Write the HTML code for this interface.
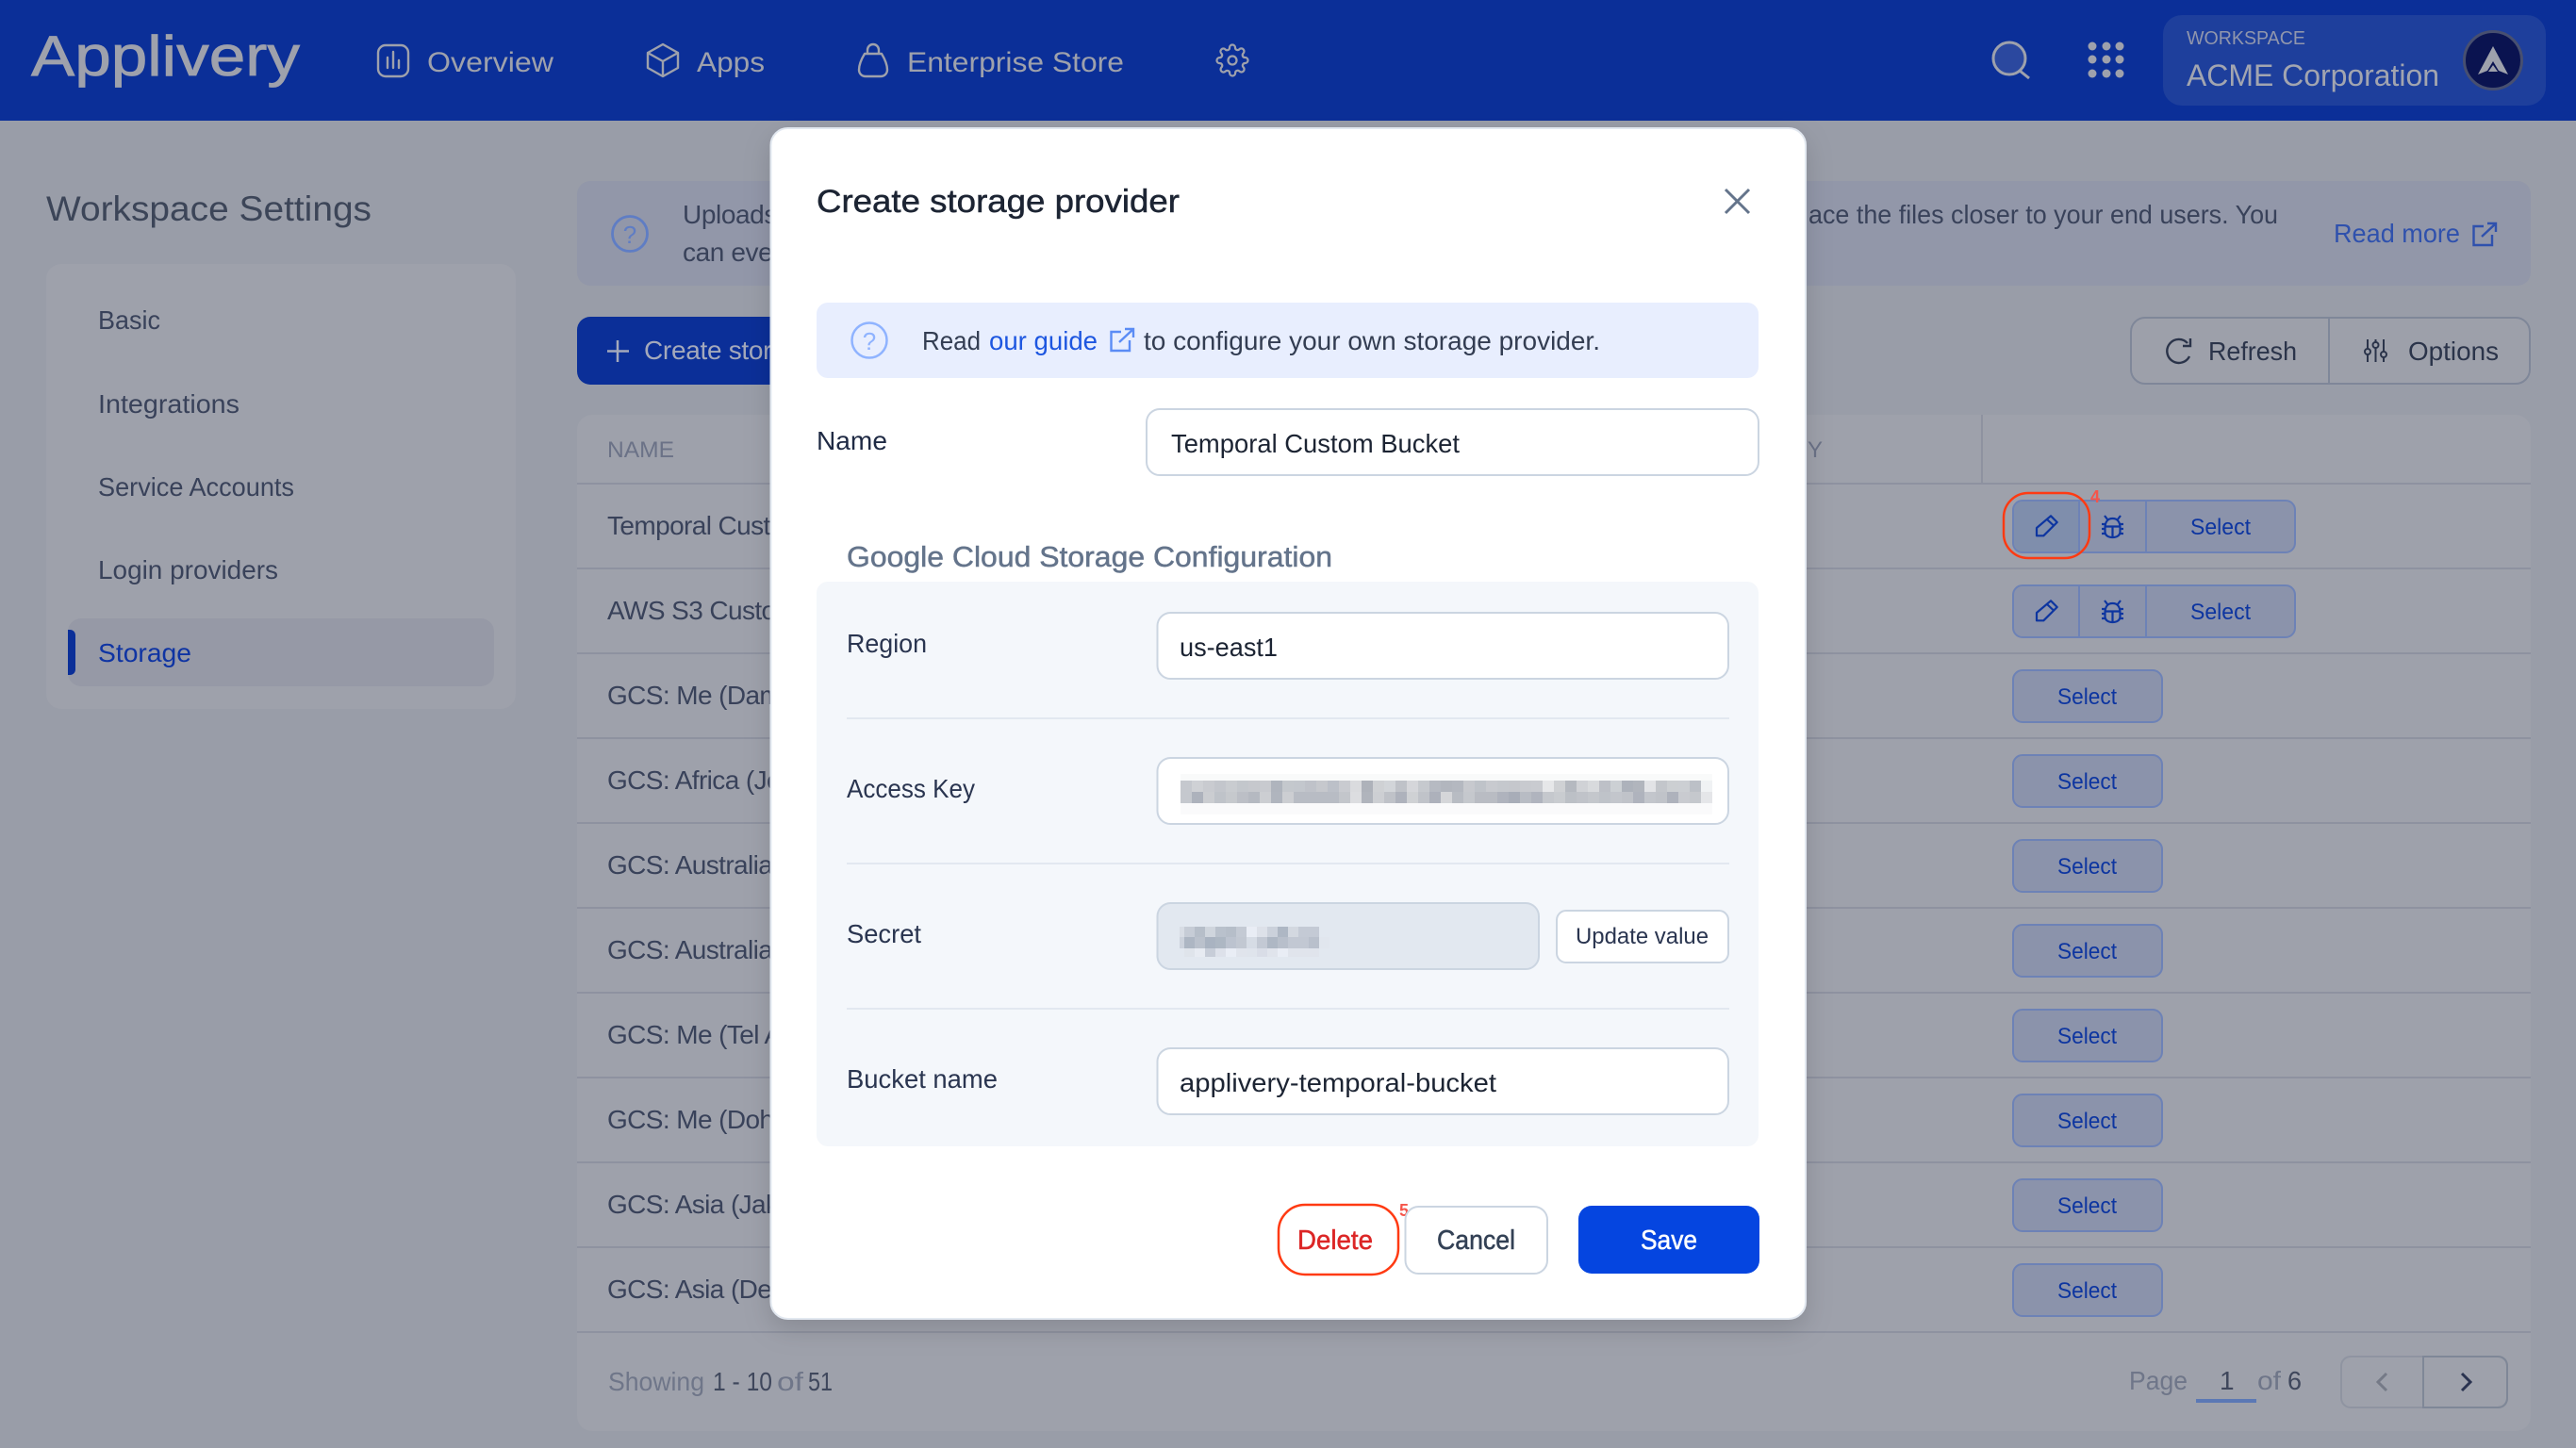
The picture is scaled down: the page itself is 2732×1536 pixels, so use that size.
<!DOCTYPE html>
<html lang="en">
<head>
<meta charset="utf-8">
<title>Create storage provider</title>
<style>
html,body{margin:0;padding:0;width:2732px;height:1536px;overflow:hidden;background:#999da8}
svg{display:block}
text{font-family:"Liberation Sans",sans-serif;white-space:pre}
.m{stroke-width:.5px;stroke:currentColor}
</style>
</head>
<body>
<svg xmlns="http://www.w3.org/2000/svg" width="2732" height="1536" viewBox="0 0 2732 1536">
<defs>
<filter id="sh" x="-5%" y="-5%" width="110%" height="110%"><feDropShadow dx="0" dy="10" stdDeviation="14" flood-color="#000" flood-opacity=".14"/></filter>
<g id="ext" fill="none" stroke-width="2.4"><path d="M12 4H1.5V24H21V13M10 15L25 1M16 1H25V10"/></g>
<g id="pen" fill="none" stroke="#0d35a0" stroke-width="2.2" stroke-linejoin="round"><path d="M2160 568.3V560L2175 547.3L2181.7 554L2167.3 568.3Z"/><path d="M2171 551L2178 557.5"/></g>
<g id="bug" fill="none" stroke="#0d35a0" stroke-width="2.2"><path d="M2232.500 560C2232.500 553 2236 550 2240.500 550S2248.500 553 2248.500 560V564C2248.500 568 2245 570 2240.500 570S2232.500 568 2232.500 564ZM2232.500 558.500H2248.500M2240.500 558.500V570M2232 547L2235.500 551.500M2249 547L2245.500 551.500M2229 556H2232.500M2229 561H2232.500M2229 566H2232.500M2252 556H2248.500M2252 561H2248.500M2252 566H2248.500"/></g>
</defs>

<!-- page -->
<rect width="2732" height="1536" fill="#999da8"/>

<!-- top bar -->
<rect width="2732" height="128" fill="#0b2f98"/>
<text x="33" y="80" font-size="60" fill="#9ea1ac" stroke="#9ea1ac" stroke-width=".8" textLength="285" lengthAdjust="spacingAndGlyphs">Applivery</text>

<g fill="none" stroke="#9ea1ac" stroke-width="2.4" stroke-linejoin="round" stroke-linecap="round">
<rect x="401" y="48" width="32" height="33" rx="8"/><path d="M411 61V72M417 55V72M423 64V72"/>
<path d="M703 47L719 56V72L703 81L687 72V56ZM687 56L703 65L719 56M703 65V81"/>
<path d="M920 57V53a6 6 0 0 1 12 0v4M917 57H935C938 62 941 69 941 74C941 78 938 81 934 81H918C914 81 911 78 911 74C911 69 914 62 917 57Z"/>
<g transform="translate(1289,46) scale(1.5)" stroke-width="1.5"><path d="M12 15a3 3 0 1 0 0-6 3 3 0 0 0 0 6z"/><path d="M19.4 15a1.65 1.65 0 0 0 .33 1.82l.06.06a2 2 0 1 1-2.83 2.83l-.06-.06a1.65 1.65 0 0 0-1.82-.33 1.65 1.65 0 0 0-1 1.51V21a2 2 0 1 1-4 0v-.09A1.65 1.65 0 0 0 9 19.4a1.65 1.65 0 0 0-1.82.33l-.06.06a2 2 0 1 1-2.83-2.83l.06-.06a1.65 1.65 0 0 0 .33-1.82 1.65 1.65 0 0 0-1.51-1H3a2 2 0 1 1 0-4h.09A1.65 1.65 0 0 0 4.6 9a1.65 1.65 0 0 0-.33-1.82l-.06-.06a2 2 0 1 1 2.83-2.83l.06.06a1.65 1.65 0 0 0 1.82.33H9a1.65 1.65 0 0 0 1-1.51V3a2 2 0 1 1 4 0v.09a1.65 1.65 0 0 0 1 1.51 1.65 1.65 0 0 0 1.82-.33l.06-.06a2 2 0 1 1 2.83 2.83l-.06.06a1.65 1.65 0 0 0-.33 1.82V9a1.65 1.65 0 0 0 1.51 1H21a2 2 0 1 1 0 4h-.09a1.65 1.65 0 0 0-1.51 1z"/></g>
</g>
<g fill="#9ea1ac" font-size="30">
<text x="453" y="76" textLength="134" lengthAdjust="spacingAndGlyphs">Overview</text>
<text x="739" y="76" textLength="72" lengthAdjust="spacingAndGlyphs">Apps</text>
<text x="962" y="76" textLength="230" lengthAdjust="spacingAndGlyphs">Enterprise Store</text>
</g>

<circle cx="2131" cy="62" r="17" fill="#2b489f" stroke="#9ea1ac" stroke-width="3"/>
<path d="M2142 75L2152 83" stroke="#9ea1ac" stroke-width="3" fill="none"/>
<g fill="#9ea1ac">
<circle cx="2219" cy="49" r="4.500"/><circle cx="2234" cy="49" r="4.500"/><circle cx="2248" cy="49" r="4.500"/>
<circle cx="2219" cy="63" r="4.500"/><circle cx="2234" cy="63" r="4.500"/><circle cx="2248" cy="63" r="4.500"/>
<circle cx="2219" cy="78" r="4.500"/><circle cx="2234" cy="78" r="4.500"/><circle cx="2248" cy="78" r="4.500"/>
</g>
<rect x="2294" y="16" width="406" height="96" rx="20" fill="#1e3f9c"/>
<text x="2319" y="47" font-size="20" fill="#9096ad" textLength="126" lengthAdjust="spacingAndGlyphs">WORKSPACE</text>
<text x="2319" y="91" font-size="32" fill="#a2a5b0" textLength="268" lengthAdjust="spacingAndGlyphs">ACME Corporation</text>
<circle cx="2644" cy="64" r="30.500" fill="#0a1350" stroke="#474f70" stroke-width="3"/>
<path d="M2644 49L2660 79L2650 75L2644 65L2638 75L2628 79Z" fill="#9ea1ac"/>
<path d="M2644 69L2649 76H2639Z" fill="#9ea1ac"/>

<!-- sidebar -->
<text x="49" y="234" font-size="37" fill="#3c4558" textLength="345" lengthAdjust="spacingAndGlyphs">Workspace Settings</text>
<rect x="49" y="280" width="498" height="472" rx="16" fill="#9ea1ab"/>
<rect x="72" y="656" width="452" height="72" rx="14" fill="#9699a6"/>
<path d="M72 668H74C78 668 80 671 80 674V710C80 713 78 716 74 716H72Z" fill="#0b2f98"/>
<g font-size="28" fill="#39425a">
<text x="104" y="349" textLength="66" lengthAdjust="spacingAndGlyphs">Basic</text>
<text x="104" y="438" textLength="150" lengthAdjust="spacingAndGlyphs">Integrations</text>
<text x="104" y="526" textLength="208" lengthAdjust="spacingAndGlyphs">Service Accounts</text>
<text x="104" y="614" textLength="191" lengthAdjust="spacingAndGlyphs">Login providers</text>
<text x="104" y="702" fill="#0f34a3" textLength="99" lengthAdjust="spacingAndGlyphs">Storage</text>
</g>

<!-- info banner -->
<rect x="612" y="192" width="2072" height="111" rx="14" fill="#9297a9"/>
<circle cx="668" cy="248" r="18.500" fill="none" stroke="#5f7dc4" stroke-width="2.800"/>
<text x="668" y="258" font-size="26" fill="#5f7dc4" text-anchor="middle">?</text>
<text x="724" y="237" font-size="28" fill="#39425a" letter-spacing="-.4">Uploads</text>
<text x="724" y="277" font-size="28" fill="#39425a" letter-spacing="-.4">can even</text>
<text x="1918" y="237" font-size="28" fill="#39425a" textLength="498" lengthAdjust="spacingAndGlyphs">ace the files closer to your end users. You</text>
<text x="2475" y="257" font-size="28" fill="#2f51ad" textLength="134" lengthAdjust="spacingAndGlyphs">Read more</text>
<use href="#ext" x="2622" y="236" stroke="#2f51ad"/>

<!-- toolbar -->
<rect x="612" y="336" width="300" height="72" rx="14" fill="#0b2f98"/>
<path d="M655 361V384M644 372.500H667" stroke="#a4a9bb" stroke-width="2.500" fill="none"/>
<text x="683" y="381" font-size="28" fill="#a4a9bb" letter-spacing="-.3">Create storage</text>
<rect x="2260" y="337" width="423" height="70" rx="15" fill="#9da0aa" stroke="#7f8799" stroke-width="2"/>
<path d="M2470 337V407" stroke="#7f8799" stroke-width="2"/>
<path d="M2320 364A12.500 12.500 0 1 0 2322 378M2323 359V367H2315" fill="none" stroke="#2b344a" stroke-width="2.400"/>
<text x="2342" y="382" font-size="28" fill="#2b344a" textLength="94" lengthAdjust="spacingAndGlyphs">Refresh</text>
<g fill="none" stroke="#2b344a" stroke-width="2"><path d="M2511 360V370M2511 376V384M2519.500 360V363M2519.500 369V384M2528 360V373M2528 379V384"/><circle cx="2511" cy="373" r="3"/><circle cx="2519.500" cy="366" r="3"/><circle cx="2528" cy="376" r="3"/></g>
<text x="2554" y="382" font-size="28" fill="#2b344a" textLength="96" lengthAdjust="spacingAndGlyphs">Options</text>

<!-- table -->
<rect x="612" y="440" width="2072" height="1078" rx="16" fill="#9ea1ab"/>
<g stroke="#8e92a0" stroke-width="2">
<path d="M612 513H2684M612 603H2684M612 693H2684M612 783H2684M612 873H2684M612 963H2684M612 1053H2684M612 1143H2684M612 1233H2684M612 1323H2684M612 1413H2684M2102 440V513"/>
</g>
<text x="644" y="485" font-size="24" fill="#6b7287" textLength="71" lengthAdjust="spacingAndGlyphs">NAME</text>
<text x="1917" y="485" font-size="24" fill="#6b7287">Y</text>
<g font-size="28" fill="#39425a" letter-spacing="-.6">
<text x="644" y="567">Temporal Custom Bucket</text>
<text x="644" y="657">AWS S3 Custom Bucket</text>
<text x="644" y="747">GCS: Me (Dammam)</text>
<text x="644" y="837">GCS: Africa (Johannesburg)</text>
<text x="644" y="927">GCS: Australia (Sydney)</text>
<text x="644" y="1017">GCS: Australia (Melbourne)</text>
<text x="644" y="1107">GCS: Me (Tel Aviv)</text>
<text x="644" y="1197">GCS: Me (Doha)</text>
<text x="644" y="1287">GCS: Asia (Jakarta)</text>
<text x="644" y="1377">GCS: Asia (Delhi)</text>
</g>

<g fill="#8b93ab" stroke="#6d82b6" stroke-width="2">
<rect x="2135" y="531" width="299" height="55" rx="10"/>
<rect x="2135" y="621" width="299" height="55" rx="10"/>
<rect x="2135" y="711" width="158" height="55" rx="10"/>
<rect x="2135" y="801" width="158" height="55" rx="10"/>
<rect x="2135" y="891" width="158" height="55" rx="10"/>
<rect x="2135" y="981" width="158" height="55" rx="10"/>
<rect x="2135" y="1071" width="158" height="55" rx="10"/>
<rect x="2135" y="1161" width="158" height="55" rx="10"/>
<rect x="2135" y="1251" width="158" height="55" rx="10"/>
<rect x="2135" y="1341" width="158" height="55" rx="10"/>
</g>
<path d="M2205 532H2145a9 9 0 0 0-9 9v35a9 9 0 0 0 9 9h60z" fill="#7f8eac"/>
<path d="M2205 531V586M2276 531V586M2205 621V676M2276 621V676" stroke="#6d82b6" stroke-width="2" fill="none"/>
<use href="#pen"/><use href="#bug"/>
<use href="#pen" y="90"/><use href="#bug" y="90"/>
<g font-size="24" fill="#0d35a0">
<text x="2323" y="567" textLength="64" lengthAdjust="spacingAndGlyphs">Select</text>
<text x="2323" y="657" textLength="64" lengthAdjust="spacingAndGlyphs">Select</text>
<text x="2182" y="747" textLength="63" lengthAdjust="spacingAndGlyphs">Select</text>
<text x="2182" y="837" textLength="63" lengthAdjust="spacingAndGlyphs">Select</text>
<text x="2182" y="927" textLength="63" lengthAdjust="spacingAndGlyphs">Select</text>
<text x="2182" y="1017" textLength="63" lengthAdjust="spacingAndGlyphs">Select</text>
<text x="2182" y="1107" textLength="63" lengthAdjust="spacingAndGlyphs">Select</text>
<text x="2182" y="1197" textLength="63" lengthAdjust="spacingAndGlyphs">Select</text>
<text x="2182" y="1287" textLength="63" lengthAdjust="spacingAndGlyphs">Select</text>
<text x="2182" y="1377" textLength="63" lengthAdjust="spacingAndGlyphs">Select</text>
</g>
<rect x="2125" y="523" width="91" height="69" rx="26" fill="none" stroke="#ff3a12" stroke-width="2.500"/>
<text x="2217" y="533" font-size="18" font-weight="bold" fill="#f5554a">4</text>

<!-- table footer -->
<g font-size="28" fill="#6f7689">
<text x="645" y="1475" textLength="102" lengthAdjust="spacingAndGlyphs">Showing</text>
<text x="756" y="1475" fill="#3f475c" textLength="63" lengthAdjust="spacingAndGlyphs">1 - 10</text>
<text x="824" y="1475" textLength="28" lengthAdjust="spacingAndGlyphs">of</text>
<text x="857" y="1475" fill="#3f475c" textLength="26" lengthAdjust="spacingAndGlyphs">51</text>
<text x="2258" y="1474" textLength="62" lengthAdjust="spacingAndGlyphs">Page</text>
<text x="2354" y="1474" fill="#3f475c">1</text>
<text x="2394" y="1474" textLength="25" lengthAdjust="spacingAndGlyphs">of</text>
<text x="2426" y="1474" fill="#3f475c" textLength="15" lengthAdjust="spacingAndGlyphs">6</text>
</g>
<rect x="2329" y="1484" width="64" height="4" fill="#5b78b5"/>
<rect x="2483" y="1439" width="176" height="54" rx="10" fill="none" stroke="#8f94a1" stroke-width="2"/>
<path d="M2570 1439H2649C2655 1439 2659 1443 2659 1449V1483C2659 1489 2655 1493 2649 1493H2570Z" fill="none" stroke="#7f8797" stroke-width="2"/>
<path d="M2531 1457L2522 1466L2531 1475" fill="none" stroke="#757a87" stroke-width="3"/>
<path d="M2611 1457L2620 1466L2611 1475" fill="none" stroke="#2a3350" stroke-width="3"/>

<!-- modal -->
<rect x="817.500" y="136" width="1097.500" height="1263" rx="18" fill="#fff" stroke="#e2e8f0" stroke-width="2" filter="url(#sh)"/>
<text class="m" x="866" y="225" font-size="34" fill="#1c2433" color="#1c2433" textLength="385" lengthAdjust="spacingAndGlyphs">Create storage provider</text>
<path d="M1830 201L1855 226M1855 201L1830 226" stroke="#64748b" stroke-width="3" fill="none"/>

<rect x="866" y="321" width="999" height="80" rx="12" fill="#e8eefe"/>
<circle cx="922" cy="361" r="18.500" fill="none" stroke="#8fb3ff" stroke-width="2.500"/>
<text x="922" y="371" font-size="26" fill="#8fb3ff" text-anchor="middle">?</text>
<text x="978" y="371" font-size="28" fill="#333d52" textLength="62" lengthAdjust="spacingAndGlyphs">Read</text>
<text x="1049" y="371" font-size="28" fill="#1d56e0" textLength="115" lengthAdjust="spacingAndGlyphs">our guide</text>
<use href="#ext" x="1177" y="348" stroke="#5b8cf5"/>
<text x="1213" y="371" font-size="28" fill="#333d52" textLength="484" lengthAdjust="spacingAndGlyphs">to configure your own storage provider.</text>

<text x="866" y="477" font-size="28" fill="#1f2a44" textLength="75" lengthAdjust="spacingAndGlyphs">Name</text>
<rect x="1216" y="434" width="649" height="70" rx="14" fill="#fff" stroke="#cbd5e1" stroke-width="2"/>
<text x="1242" y="480" font-size="28" fill="#1c2433" textLength="306" lengthAdjust="spacingAndGlyphs">Temporal Custom Bucket</text>

<text x="898" y="601" font-size="31" fill="#64748b" color="#64748b" class="m" textLength="515" lengthAdjust="spacingAndGlyphs">Google Cloud Storage Configuration</text>
<rect x="866" y="617" width="999" height="599" rx="12" fill="#f4f7fb"/>
<path d="M898 762H1834M898 916H1834M898 1070H1834" stroke="#e2e8f0" stroke-width="2"/>

<g font-size="28" fill="#2a3550">
<text x="898" y="692" textLength="85" lengthAdjust="spacingAndGlyphs">Region</text>
<text x="898" y="846" textLength="136" lengthAdjust="spacingAndGlyphs">Access Key</text>
<text x="898" y="1000" textLength="79" lengthAdjust="spacingAndGlyphs">Secret</text>
<text x="898" y="1154" textLength="160" lengthAdjust="spacingAndGlyphs">Bucket name</text>
</g>
<g fill="#fff" stroke="#cbd5e1" stroke-width="2">
<rect x="1227.500" y="650" width="605.500" height="70" rx="14"/>
<rect x="1227.500" y="804" width="605.500" height="70" rx="14"/>
<rect x="1227.500" y="958" width="404.500" height="70" rx="14" fill="#e2e8f0"/>
<rect x="1651" y="966" width="182" height="55" rx="10"/>
<rect x="1227.500" y="1112" width="605.500" height="70" rx="14"/>
</g>
<text x="1251" y="696" font-size="28" fill="#1c2433" textLength="104" lengthAdjust="spacingAndGlyphs">us-east1</text>
<text x="1251" y="1158" font-size="28" fill="#1c2433" textLength="336" lengthAdjust="spacingAndGlyphs">applivery-temporal-bucket</text>
<text x="1671" y="1001" font-size="24" fill="#2a3550" textLength="141" lengthAdjust="spacingAndGlyphs">Update value</text>

<!-- pixelated access key -->
<g shape-rendering="crispEdges">
<rect x="1252" y="821" width="564" height="7" fill="#f9fafa"/>
<rect x="1252" y="852" width="564" height="12" fill="#fafafb"/>
<g>
<rect x="1252" y="828" width="12" height="12" fill="#c5c8ce"/><rect x="1264" y="828" width="12" height="12" fill="#cfd1d5"/><rect x="1276" y="828" width="12" height="12" fill="#c9cbd0"/><rect x="1288" y="828" width="12" height="12" fill="#c3c6cc"/><rect x="1300" y="828" width="12" height="12" fill="#c9ccd0"/><rect x="1312" y="828" width="12" height="12" fill="#c3c7cc"/><rect x="1324" y="828" width="12" height="12" fill="#c6c8cd"/><rect x="1336" y="828" width="12" height="12" fill="#c8cacf"/><rect x="1348" y="828" width="12" height="12" fill="#afb4bd"/><rect x="1360" y="828" width="12" height="12" fill="#c4c8cd"/><rect x="1372" y="828" width="12" height="12" fill="#c3c7cd"/><rect x="1384" y="828" width="12" height="12" fill="#bfc2c9"/><rect x="1396" y="828" width="12" height="12" fill="#c6c8cd"/><rect x="1408" y="828" width="12" height="12" fill="#bcc0c8"/><rect x="1420" y="828" width="12" height="12" fill="#c9cbd0"/><rect x="1432" y="828" width="12" height="12" fill="#dadbde"/><rect x="1444" y="828" width="12" height="12" fill="#aeb2ba"/><rect x="1456" y="828" width="12" height="12" fill="#cfd1d4"/><rect x="1468" y="828" width="12" height="12" fill="#d2d5d9"/><rect x="1480" y="828" width="12" height="12" fill="#bfc2c8"/><rect x="1492" y="828" width="12" height="12" fill="#d5d6da"/><rect x="1504" y="828" width="12" height="12" fill="#c6c9ce"/><rect x="1516" y="828" width="12" height="12" fill="#b6bac2"/><rect x="1528" y="828" width="12" height="12" fill="#b2b6be"/><rect x="1540" y="828" width="12" height="12" fill="#b4b8c0"/><rect x="1552" y="828" width="12" height="12" fill="#c7c9ce"/><rect x="1564" y="828" width="12" height="12" fill="#bfc3c9"/><rect x="1576" y="828" width="12" height="12" fill="#c8cacf"/><rect x="1588" y="828" width="12" height="12" fill="#c5c8cd"/><rect x="1600" y="828" width="12" height="12" fill="#c5c7cc"/><rect x="1612" y="828" width="12" height="12" fill="#c8cacf"/><rect x="1624" y="828" width="12" height="12" fill="#c9cbd0"/><rect x="1636" y="828" width="12" height="12" fill="#e6e7e9"/><rect x="1648" y="828" width="12" height="12" fill="#cfd1d4"/><rect x="1660" y="828" width="12" height="12" fill="#b5b9c0"/><rect x="1672" y="828" width="12" height="12" fill="#d0d2d6"/><rect x="1684" y="828" width="12" height="12" fill="#d8dadd"/><rect x="1696" y="828" width="12" height="12" fill="#bdc0c7"/><rect x="1708" y="828" width="12" height="12" fill="#ccd0d4"/><rect x="1720" y="828" width="12" height="12" fill="#adb2bb"/><rect x="1732" y="828" width="12" height="12" fill="#b1b5bd"/><rect x="1744" y="828" width="12" height="12" fill="#e2e3e6"/><rect x="1756" y="828" width="12" height="12" fill="#c3c6cb"/><rect x="1768" y="828" width="12" height="12" fill="#cccfd2"/><rect x="1780" y="828" width="12" height="12" fill="#cccfd3"/><rect x="1792" y="828" width="12" height="12" fill="#bcc0c7"/><rect x="1804" y="828" width="12" height="12" fill="#f0f2f4"/>
</g>
<g>
<rect x="1252" y="840" width="12" height="12" fill="#c5c8ce"/><rect x="1264" y="840" width="12" height="12" fill="#adb2bc"/><rect x="1276" y="840" width="12" height="12" fill="#cbcdd1"/><rect x="1288" y="840" width="12" height="12" fill="#bfc3c9"/><rect x="1300" y="840" width="12" height="12" fill="#c6c9cd"/><rect x="1312" y="840" width="12" height="12" fill="#bcbfc6"/><rect x="1324" y="840" width="12" height="12" fill="#b5b9c1"/><rect x="1336" y="840" width="12" height="12" fill="#ccced2"/><rect x="1348" y="840" width="12" height="12" fill="#b0b5be"/><rect x="1360" y="840" width="12" height="12" fill="#ccced2"/><rect x="1372" y="840" width="12" height="12" fill="#b8bcc4"/><rect x="1384" y="840" width="12" height="12" fill="#b8bcc4"/><rect x="1396" y="840" width="12" height="12" fill="#b8bcc4"/><rect x="1408" y="840" width="12" height="12" fill="#b8bcc4"/><rect x="1420" y="840" width="12" height="12" fill="#c3c6cb"/><rect x="1432" y="840" width="12" height="12" fill="#dcdde0"/><rect x="1444" y="840" width="12" height="12" fill="#b0b4bc"/><rect x="1456" y="840" width="12" height="12" fill="#cdcfd3"/><rect x="1468" y="840" width="12" height="12" fill="#bfc2c8"/><rect x="1480" y="840" width="12" height="12" fill="#aeb2bc"/><rect x="1492" y="840" width="12" height="12" fill="#cfd1d4"/><rect x="1504" y="840" width="12" height="12" fill="#c0c3c9"/><rect x="1516" y="840" width="12" height="12" fill="#adb1bb"/><rect x="1528" y="840" width="12" height="12" fill="#d5d6d9"/><rect x="1540" y="840" width="12" height="12" fill="#b8bcc3"/><rect x="1552" y="840" width="12" height="12" fill="#c5c8cd"/><rect x="1564" y="840" width="12" height="12" fill="#b9bcc3"/><rect x="1576" y="840" width="12" height="12" fill="#b9bcc3"/><rect x="1588" y="840" width="12" height="12" fill="#afb3bd"/><rect x="1600" y="840" width="12" height="12" fill="#a8adb8"/><rect x="1612" y="840" width="12" height="12" fill="#b8bcc4"/><rect x="1624" y="840" width="12" height="12" fill="#b0b4be"/><rect x="1636" y="840" width="12" height="12" fill="#c5c8cd"/><rect x="1648" y="840" width="12" height="12" fill="#c9ccd0"/><rect x="1660" y="840" width="12" height="12" fill="#bcc0c6"/><rect x="1672" y="840" width="12" height="12" fill="#c0c3c9"/><rect x="1684" y="840" width="12" height="12" fill="#c4c7cc"/><rect x="1696" y="840" width="12" height="12" fill="#bfc3c9"/><rect x="1708" y="840" width="12" height="12" fill="#c3c6cc"/><rect x="1720" y="840" width="12" height="12" fill="#c0c3c9"/><rect x="1732" y="840" width="12" height="12" fill="#afb3bd"/><rect x="1744" y="840" width="12" height="12" fill="#c3c6cc"/><rect x="1756" y="840" width="12" height="12" fill="#c0c3c9"/><rect x="1768" y="840" width="12" height="12" fill="#aeb2bc"/><rect x="1780" y="840" width="12" height="12" fill="#c9cbd0"/><rect x="1792" y="840" width="12" height="12" fill="#c5c8cd"/><rect x="1804" y="840" width="12" height="12" fill="#e5e6e9"/>
</g>
<!-- pixelated secret -->
<g>
<rect x="1251" y="983" width="5" height="11" fill="#d8dde5"/><rect x="1256" y="983" width="11" height="11" fill="#c6ccd6"/><rect x="1267" y="983" width="11" height="11" fill="#b6bec9"/><rect x="1278" y="983" width="11" height="11" fill="#cfd5dd"/><rect x="1289" y="983" width="11" height="11" fill="#b9c1cc"/><rect x="1300" y="983" width="11" height="11" fill="#b6bec9"/><rect x="1311" y="983" width="11" height="11" fill="#c4cad4"/><rect x="1322" y="983" width="11" height="11" fill="#e9edf5"/><rect x="1333" y="983" width="11" height="11" fill="#dde1e9"/><rect x="1344" y="983" width="11" height="11" fill="#cbd1db"/><rect x="1355" y="983" width="11" height="11" fill="#aeb7c4"/><rect x="1366" y="983" width="11" height="11" fill="#d3d8e0"/><rect x="1377" y="983" width="11" height="11" fill="#c4cad5"/><rect x="1388" y="983" width="11" height="11" fill="#c4cad5"/>
<rect x="1251" y="994" width="5" height="12" fill="#ccd2dc"/><rect x="1256" y="994" width="11" height="12" fill="#adb6c3"/><rect x="1267" y="994" width="11" height="12" fill="#bac1cc"/><rect x="1278" y="994" width="11" height="12" fill="#a9b3c1"/><rect x="1289" y="994" width="11" height="12" fill="#adb7c3"/><rect x="1300" y="994" width="11" height="12" fill="#bcc3cf"/><rect x="1311" y="994" width="11" height="12" fill="#c2c8d2"/><rect x="1322" y="994" width="11" height="12" fill="#d6dce5"/><rect x="1333" y="994" width="11" height="12" fill="#c3c9d4"/><rect x="1344" y="994" width="11" height="12" fill="#aeb7c4"/><rect x="1355" y="994" width="11" height="12" fill="#b8bfcb"/><rect x="1366" y="994" width="11" height="12" fill="#c2c8d3"/><rect x="1377" y="994" width="11" height="12" fill="#c2c8d3"/><rect x="1388" y="994" width="11" height="12" fill="#b9c0cc"/><rect x="1399" y="994" width="11" height="12" fill="#e1e6ee"/>
<rect x="1256" y="1006" width="11" height="9" fill="#dfe4eb"/><rect x="1267" y="1006" width="11" height="9" fill="#e7ebf2"/><rect x="1278" y="1006" width="11" height="9" fill="#c7cdd8"/><rect x="1289" y="1006" width="11" height="9" fill="#dde1ea"/><rect x="1300" y="1006" width="11" height="9" fill="#e9edf5"/><rect x="1311" y="1006" width="11" height="9" fill="#e0e4ec"/><rect x="1322" y="1006" width="11" height="9" fill="#dfe4ec"/><rect x="1333" y="1006" width="11" height="9" fill="#d9dde7"/><rect x="1344" y="1006" width="11" height="9" fill="#e0e4ec"/><rect x="1355" y="1006" width="11" height="9" fill="#e9edf5"/><rect x="1366" y="1006" width="11" height="9" fill="#e0e4ec"/><rect x="1377" y="1006" width="11" height="9" fill="#e0e4ec"/><rect x="1388" y="1006" width="11" height="9" fill="#e0e4ec"/>
</g>
</g>

<!-- modal footer -->
<rect x="1356" y="1278" width="127" height="74" rx="28" fill="#fff" stroke="#ff3a12" stroke-width="2.500"/>
<text x="1376" y="1325" font-size="29" fill="#dc2626" class="m" color="#dc2626" textLength="80" lengthAdjust="spacingAndGlyphs">Delete</text>
<text x="1484" y="1290" font-size="18" font-weight="bold" fill="#f5554a">5</text>
<rect x="1490.500" y="1280" width="150.500" height="71" rx="14" fill="#fff" stroke="#cbd5e1" stroke-width="2"/>
<text x="1524" y="1325" font-size="29" fill="#334155" class="m" color="#334155" textLength="83" lengthAdjust="spacingAndGlyphs">Cancel</text>
<rect x="1674" y="1279" width="192" height="72" rx="14" fill="#0545e0"/>
<text x="1740" y="1325" font-size="29" fill="#fff" class="m" color="#fff" textLength="60" lengthAdjust="spacingAndGlyphs">Save</text>
</svg>
</body>
</html>
